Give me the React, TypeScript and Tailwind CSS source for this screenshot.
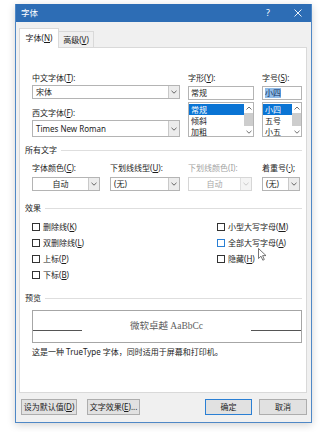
import type { ReactNode } from "react";

/* Word "字体" dialog, Windows 10 look, scaled down. */

function Chev({ up = false, className = "" }: { up?: boolean; className?: string }) {
  return (
    <svg width="6" height="4" viewBox="0 0 6 4" className={className}>
      <path
        d={up ? "M0.5 3.5 L3 1 L5.5 3.5" : "M0.5 0.8 L3 3.2 L5.5 0.8"}
        fill="none"
        stroke="currentColor"
        strokeWidth="0.9"
      />
    </svg>
  );
}

function Label({ children, muted = false }: { children: ReactNode; muted?: boolean }) {
  return (
    <div className={`h-[10px] whitespace-nowrap leading-[10px] ${muted ? "text-[#a3a3a3]" : ""}`}>{children}</div>
  );
}

function Combo({
  text,
  h = "h-[14px]",
  center = false,
  disabled = false,
  className = "",
}: {
  text: ReactNode;
  h?: string;
  center?: boolean;
  disabled?: boolean;
  className?: string;
}) {
  return (
    <div
      className={`flex ${h} border ${disabled ? "border-[#d6d6d6] text-[#a8a8a8]" : "border-[#b4b4b4]"} bg-white ${className}`}
    >
      <div className={`flex flex-1 items-center px-[3px] ${center ? "justify-center" : ""}`}>{text}</div>
      <div
        className={`flex w-[11px] items-center justify-center border-l ${disabled ? "border-[#e0e0e0] bg-[#f4f4f4] text-[#c4c4c4]" : "border-[#c9c9c9] bg-[#ececec] text-[#555]"}`}
      >
        <Chev />
      </div>
    </div>
  );
}

function ListBox({ items }: { items: string[] }) {
  return (
    <div className="flex h-[35px] border border-[#b4b4b4] bg-white">
      <div className="flex flex-1 flex-col pt-[1px]">
        {items.map((t, i) => (
          <div
            key={t}
            className={`h-[11px] px-[2px] leading-[11px] ${i === 0 ? "bg-[#0a74d4] text-white" : ""}`}
          >
            {t}
          </div>
        ))}
      </div>
      <div className="flex w-[9px] flex-col items-center text-[#606060]">
        <div className="flex h-[9px] items-center">
          <Chev up />
        </div>
        <div className="my-[1px] w-full flex-1 bg-[#cdcdcd]" />
        <div className="flex h-[9px] items-center">
          <Chev />
        </div>
      </div>
    </div>
  );
}

function Section({ title, className = "" }: { title: string; className?: string }) {
  return (
    <div className={`flex h-[10px] items-center gap-[4px] leading-[10px] ${className}`}>
      <span>{title}</span>
      <div className="h-px flex-1 bg-[#dedede]" />
    </div>
  );
}

function Check({ children, hover = false }: { children: ReactNode; hover?: boolean }) {
  return (
    <div className="flex h-[16px] items-center gap-[3px]">
      <span className={`h-[8px] w-[8px] border bg-white ${hover ? "border-[#2a7fd4]" : "border-[#333]"}`} />
      <span className="leading-[10px]">{children}</span>
    </div>
  );
}

function Btn({ children, w, def = false }: { children: ReactNode; w: string; def?: boolean }) {
  return (
    <div
      className={`flex h-[16px] ${w} items-center justify-center border bg-[#e1e1e1] leading-[10px] ${def ? "border-[#2a7fd4]" : "border-[#adadad]"}`}
    >
      {children}
    </div>
  );
}

export default function App() {
  return (
    <div className="relative h-[432px] w-[324px] bg-white pl-[15px] pt-[4px] font-['Noto_Sans','Noto_Sans_CJK_SC',sans-serif] text-[8px] leading-[10px] text-[#1c1c1c]">
      <div className="flex h-[419px] w-[297px] flex-col border border-t-0 border-[#4f88c6] bg-[#f0f0f0] shadow-[0_2px_8px_rgba(0,0,0,0.18)]">
        {/* title bar */}
        <div className="flex h-[18px] items-center bg-[#2d6db5] pl-[5px] pr-[9px] text-[8.5px] text-white">
          <span className="flex-1">字体</span>
          <span className="mr-[24px] text-[9px]">?</span>
          <svg width="8" height="8" viewBox="0 0 8 8">
            <path d="M0.5 0.5 L7.5 7.5 M7.5 0.5 L0.5 7.5" stroke="white" strokeWidth="0.9" />
          </svg>
        </div>

        <div className="px-[3px] pt-[6px]">
          {/* tabs */}
          <div className="flex h-[19px] items-end">
            <div className="relative z-10 -mb-px flex h-[20px] w-[40px] items-center justify-center border border-b-0 border-[#d9d9d9] bg-white pb-[1px]">
              字体(<u>N</u>)
            </div>
            <div className="flex h-[16px] w-[35px] items-center justify-center border border-b-0 border-l-0 border-[#d9d9d9] bg-[#f0f0f0]">
              高级(<u>V</u>)
            </div>
          </div>

          {/* tab panel */}
          <div className="h-[346px] w-[288px] border border-[#d9d9d9] bg-white pl-[5px] pr-[4px] pt-[25px]">
            <div className="flex gap-[8px] pl-[7px]">
              <div className="w-[148px]">
                <Label>
                  中文字体(<u>T</u>):
                </Label>
                <Combo text="宋体" className="mt-[2px]" />
                <div className="mt-[9px]">
                  <Label>
                    西文字体(<u>F</u>):
                  </Label>
                </div>
                <Combo text="Times New Roman" h="h-[17px]" className="mt-[2px]" />
              </div>
              <div className="w-[66px]">
                <Label>
                  字形(<u>Y</u>):
                </Label>
                <div className="mt-[3px] flex h-[14px] items-center border border-[#b4b4b4] bg-white px-[2px]">常规</div>
                <div className="mt-[2px]">
                  <ListBox items={["常规", "倾斜", "加粗"]} />
                </div>
              </div>
              <div className="w-[40px]">
                <Label>
                  字号(<u>S</u>):
                </Label>
                <div className="mt-[3px] flex h-[14px] items-center border border-[#b4b4b4] bg-white px-[2px]">
                  <span className="bg-[#8fbbe8] text-[#0d2f63]">小四</span>
                </div>
                <div className="mt-[2px]">
                  <ListBox items={["小四", "五号", "小五"]} />
                </div>
              </div>
            </div>

            <Section title="所有文字" className="mt-[8px]" />
            <div className="mt-[8px] flex pl-[7px]">
              <div className="w-[68px]">
                <Label>
                  字体颜色(<u>C</u>):
                </Label>
                <Combo text="自动" center className="mt-[4px]" />
              </div>
              <div className="ml-[10px] w-[70px]">
                <Label>
                  下划线线型(<u>U</u>):
                </Label>
                <Combo text="(无)" className="mt-[4px]" />
              </div>
              <div className="ml-[8px] w-[64px]">
                <Label muted>下划线颜色(I):</Label>
                <Combo text="自动" center disabled className="mt-[4px]" />
              </div>
              <div className="ml-[10px] w-[38px]">
                <Label>
                  着重号(<u>·</u>);
                </Label>
                <Combo text="(无)" className="mt-[4px]" />
              </div>
            </div>

            <Section title="效果" className="mt-[12px]" />
            <div className="mt-[6px] grid grid-cols-[185px_1fr] pl-[7px]">
              <div>
                <Check>
                  删除线(<u>K</u>)
                </Check>
                <Check>
                  双删除线(<u>L</u>)
                </Check>
                <Check>
                  上标(<u>P</u>)
                </Check>
                <Check>
                  下标(<u>B</u>)
                </Check>
              </div>
              <div>
                <Check>
                  小型大写字母(<u>M</u>)
                </Check>
                <Check hover>
                  全部大写字母(<u>A</u>)
                </Check>
                <Check>
                  隐藏(<u>H</u>)
                </Check>
              </div>
            </div>

            <Section title="预览" className="mt-[10px]" />
            <div className="ml-[7px] mt-[7px] h-[33px] border border-[#a6a6a6] bg-white">
              <div className="mt-[10px] flex h-[10px] items-end justify-between">
                <div className="h-px w-[49px] bg-[#555]" />
                <span className="font-['Liberation_Serif','Noto_Sans_CJK_SC',serif] text-[9.5px] leading-[10px] text-[#606060]">
                  微软卓越 AaBbCc
                </span>
                <div className="h-px w-[50px] bg-[#555]" />
              </div>
            </div>
            <div className="ml-[7px] mt-[4px] h-[10px] whitespace-nowrap leading-[10px]">
              这是一种 TrueType 字体，同时适用于屏幕和打印机。
            </div>
          </div>
        </div>

        {/* buttons */}
        <div className="mt-[6px] flex pl-[5px] pr-[4px]">
          <Btn w="w-[56px]">
            设为默认值(<u>D</u>)
          </Btn>
          <div className="ml-[10px]">
            <Btn w="w-[53px]">
              文字效果(<u>E</u>)...
            </Btn>
          </div>
          <div className="flex-1" />
          <Btn w="w-[47px]" def>
            确定
          </Btn>
          <div className="ml-[7px]">
            <Btn w="w-[48px]">取消</Btn>
          </div>
        </div>
      </div>

      {/* mouse pointer */}
      <svg className="absolute left-[258px] top-[248px]" width="9" height="13" viewBox="0 0 9 13">
        <path d="M0.5 0.5 L0.5 10.5 L3 8.2 L4.8 12.2 L6.3 11.5 L4.6 7.6 L8 7.6 Z" fill="white" stroke="#555" strokeWidth="0.8" />
      </svg>
    </div>
  );
}
